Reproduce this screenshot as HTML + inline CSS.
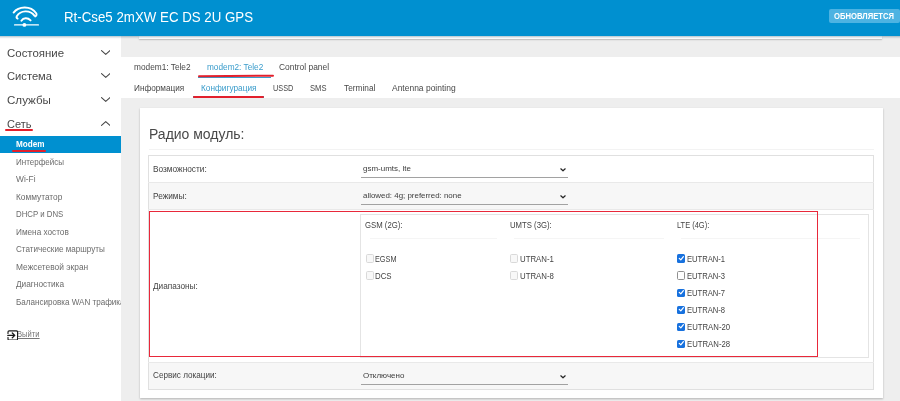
<!DOCTYPE html>
<html lang="ru"><head>
<meta charset="utf-8">
<title>Rt-Cse5 2mXW EC DS 2U GPS</title>
<style>
*{box-sizing:border-box;margin:0;padding:0}
html,body{width:900px;height:401px;overflow:hidden}
body{background:#eeeeee;font-family:"Liberation Sans",sans-serif;color:#444;position:relative}
a{color:inherit;text-decoration:none}
ul{list-style:none}
.page{position:absolute;left:-10px;top:-10px;width:920px;height:421px;background:#eeeeee;filter:blur(.4px)}
.page > .o{position:absolute;left:10px;top:10px;width:900px;height:401px}
.t{display:inline-block;position:relative;white-space:nowrap;transform-origin:0 50%}

/* header */
header{position:absolute;left:0;top:0;width:900px;height:35.7px;z-index:5}
header::before{content:"";position:absolute;left:-10px;top:-10px;right:-10px;bottom:0;background:#0090d0;box-shadow:0 1px 2px rgba(0,60,90,.35)}
header .logo{position:absolute;left:11px;top:4px;width:30px;height:24px}
header h1{position:absolute;left:63px;top:7px;font-size:14.7px;line-height:20px;font-weight:400;color:#fff;white-space:nowrap}
header .badge{position:absolute;left:828.5px;top:9.3px;width:71px;height:13.6px;border-radius:2px;background:#4db3e2;color:#fff;font-weight:700;font-size:8.3px;line-height:13.6px;white-space:nowrap}
header .badge .t{position:absolute;left:5px;top:0}

/* sidebar */
aside{position:absolute;left:-10px;top:36px;width:130.5px;height:375px;background:#fff;overflow:hidden;z-index:2}
aside .in{position:absolute;left:10px;top:0;width:120.5px;height:365px}
aside .top{position:absolute;left:7px;font-size:11.4px;line-height:16px;color:#484848}
aside .chev{position:absolute;left:100.8px;width:9.5px;height:5px}
aside .sub{position:absolute;left:16px;font-size:8.6px;line-height:12px;color:#6c6c6c}
aside .active{position:absolute;left:0;top:99.5px;width:120.5px;height:17.6px;background:#0090d0;box-shadow:-10px 0 0 #0090d0}
aside .active a{position:absolute;left:16px;top:3px;font-size:8.5px;line-height:12px;color:#fff;font-weight:700}
.red{position:absolute;background:#e2202c;height:1.7px;border-radius:1px}
aside .logout{position:absolute;left:6.9px;top:293.3px;width:60px;height:12px;font-size:8.6px;line-height:12px;color:#777}
aside .logout a{text-decoration:underline;position:absolute;left:10px;top:0}
aside .logout svg{position:absolute;left:0;top:0.3px;width:11.4px;height:10.8px}

/* main */
.stub{position:absolute;left:139.3px;top:36px;width:743.2px;height:3px;background:#fff;box-shadow:0 1px 1.5px rgba(0,0,0,.22)}
nav.tabs{position:absolute;left:120.8px;top:56.9px;width:790px;height:41.1px;background:#fff}
nav.tabs ul{position:absolute;left:-0.5px;margin-top:-0.5px;width:780px;height:20px}
nav.tabs li{position:absolute;top:0;font-size:8.2px;line-height:12px;color:#484848}
nav.tabs li.on{color:#3a9ccb}
nav.tabs .bl{position:absolute;height:1.6px;background:#3a9ccb}

section.card{position:absolute;left:139.6px;top:107.8px;width:743px;height:290.4px;background:#fff;box-shadow:0 1px 2px rgba(0,0,0,.25)}
section.card h2{position:absolute;left:10px;top:16px;font-size:14px;line-height:20px;font-weight:400;color:#484848}
section.card hr{position:absolute;left:9px;top:41.4px;width:725px;border:0;border-top:1px solid #f3f3f3}
table.cfg{position:absolute;left:8.6px;top:46.9px;width:725.6px;border-collapse:collapse;border:1px solid #e0e0e0}
table.cfg td{vertical-align:top;font-size:8.7px;line-height:12px;color:#444;padding:0;position:relative}
table.cfg tr{height:27px}
table.cfg tr.g{background:#f7f7f7}
table.cfg tr + tr > td{border-top:1px solid #e9e9e9}
table.cfg td.l{width:212px}
table.cfg td.l .t{position:absolute;left:5px;top:7px}
.sel{position:absolute;left:0;top:0;width:207.8px;height:22px;border-bottom:1px solid #a2a2a2;font-size:7.9px;line-height:12px;color:#3c3c3c}
.sel .t{position:absolute;left:2px;top:6px}
.sel svg{position:absolute;left:199.5px;top:12.6px;width:6px;height:3.6px}
table.bands{position:absolute;left:-0.8px;top:3.9px;width:509.2px;height:144.6px;border-collapse:collapse;border:1px solid #e4e4e4;background:#fff}
table.bands td{border:0 !important}
table.bands .h{position:absolute;left:5px;top:5px}
table.bands .ln{position:absolute;left:9px;right:8px;top:23.8px;height:1px;background:#f5f5f5}
table.bands li{position:absolute;left:5px;height:12px;white-space:nowrap}
table.bands li .t{position:absolute;left:10px;top:0;font-size:8.7px;line-height:12px}
.cb{position:absolute;left:-0.4px;top:-0.8px;width:8.2px;height:8.2px;border:1px solid #909090;border-radius:1.6px;background:#fff}
.cb.dis{border-color:#d9d9d9;background:#f8f8f8}
.cb.chk{border:0;background:#1771de}
.cb.chk svg{position:absolute;left:0.8px;top:0.8px;width:6.6px;height:6.6px}
.redbox{position:absolute;left:148.8px;top:210.8px;width:668.8px;height:146px;border:1.5px solid #e8283a;z-index:4}
</style>
</head>
<body>
<div class="page"><div class="o">

<header>
  <svg class="logo" viewBox="0 0 30 24" fill="none" stroke="#fff" stroke-linecap="round" stroke-linejoin="round">
    <path d="M2.6 8.6 C7.5 2.2 19.5 1.2 25.2 9.2 C26 10.6 25.4 11.8 24.2 12.4" stroke-width="1.9"></path>
    <path d="M23.4 11.6 C19 5.6 9.5 6.2 5.8 12.2 C5.2 13.4 5.8 14.2 6.6 14.6" stroke-width="1.9"></path>
    <path d="M10.4 16.8 C12.4 13.6 16.6 13.4 19.6 16.4" stroke-width="1.9"></path>
    <path d="M3.6 20.9 H27.4" stroke-width="1.35"></path>
    <circle cx="13.4" cy="20.9" r="1.9" fill="#fff" stroke="none"></circle>
  </svg>
  <h1><span class="t" style="left:0.6px;top:0.0px;transform:scaleX(0.905)">Rt-Cse5 2mXW EC DS 2U GPS</span></h1>
  <div class="badge"><span class="t" style="left:5.3px;top:1.0px;transform:scaleX(0.923)">ОБНОВЛЯЕТСЯ</span></div>
</header>

<aside><div class="in">
  <a class="top t" style="left:6.9px;top:8.8px;transform:scaleX(1.005)" href="#">Состояние</a>
  <svg class="chev" style="top:13.7px" viewBox="0 0 9.5 5" fill="none" stroke="#444" stroke-width="1.05" stroke-linecap="round" stroke-linejoin="round"><path d="M0.55 0.55 L4.75 4.45 L8.95 0.55"></path></svg>
  <a class="top t" style="left:6.9px;top:32.4px;transform:scaleX(0.981)" href="#">Система</a>
  <svg class="chev" style="top:37.4px" viewBox="0 0 9.5 5" fill="none" stroke="#444" stroke-width="1.05" stroke-linecap="round" stroke-linejoin="round"><path d="M0.55 0.55 L4.75 4.45 L8.95 0.55"></path></svg>
  <a class="top t" style="left:6.9px;top:56.1px;transform:scaleX(1.017)" href="#">Службы</a>
  <svg class="chev" style="top:61.2px" viewBox="0 0 9.5 5" fill="none" stroke="#444" stroke-width="1.05" stroke-linecap="round" stroke-linejoin="round"><path d="M0.55 0.55 L4.75 4.45 L8.95 0.55"></path></svg>
  <a class="top t" style="left:6.9px;top:79.6px;transform:scaleX(0.963)" href="#">Сеть</a>
  <svg class="chev" style="top:84.7px" viewBox="0 0 9.5 5" fill="none" stroke="#444" stroke-width="1.05" stroke-linecap="round" stroke-linejoin="round"><path d="M0.55 4.45 L4.75 0.55 L8.95 4.45"></path></svg>
  <span class="red" style="left:5.3px;top:93px;width:27.8px"></span>

  <div class="active"><a class="t" href="#" style="left:15.9px;top:2.5px;transform:scaleX(0.958)">Modem</a><span class="red" style="left:12.2px;top:14.9px;width:34.2px"></span></div>
  <a class="sub t" style="left:15.9px;top:119.7px;transform:scaleX(0.933)" href="#">Интерфейсы</a>
  <a class="sub t" style="left:15.9px;top:137.2px;transform:scaleX(0.973)" href="#">Wi-Fi</a>
  <a class="sub t" style="left:15.9px;top:154.9px;transform:scaleX(0.968)" href="#">Коммутатор</a>
  <a class="sub t" style="left:15.9px;top:172.3px;transform:scaleX(0.911)" href="#">DHCP и DNS</a>
  <a class="sub t" style="left:15.9px;top:189.9px;transform:scaleX(0.956)" href="#">Имена хостов</a>
  <a class="sub t" style="left:15.9px;top:207.3px;transform:scaleX(0.944)" href="#">Статические маршруты</a>
  <a class="sub t" style="left:15.9px;top:224.7px;transform:scaleX(0.976)" href="#">Межсетевой экран</a>
  <a class="sub t" style="left:15.9px;top:242.1px;transform:scaleX(0.963)" href="#">Диагностика</a>
  <a class="sub t" style="left:15.9px;top:259.7px;transform:scaleX(0.940)" href="#">Балансировка WAN трафика</a>

  <div class="logout">
    <a class="t" href="#" style="left:10.3px;top:-0.9px;transform:scaleX(0.888)">Выйти</a>
    <svg viewBox="0 0 11.4 10.8" fill="none" stroke="#1c1c1c" stroke-width="1.15" stroke-linecap="round" stroke-linejoin="round"><path d="M1 3.4 V1.9 Q1 0.8 2.1 0.8 H9.4 Q10.6 0.8 10.6 1.9 V8.9 Q10.6 10 9.4 10 H2.1 Q1 10 1 8.9 V7.4"></path><path d="M0.8 5.4 H7.6 M5.3 3 L7.8 5.4 L5.3 7.8" stroke-width="1.3"></path></svg>
  </div>
</div></aside>

<div class="stub"></div>

<nav class="tabs">
  <ul style="top:4px">
    <li style="left:14px"><a class="t" href="#" style="left:-0.7px;top:1.2px;transform:scaleX(1.014)">modem1: Tele2</a></li>
    <li class="on" style="left:87px"><a class="t" href="#" style="left:-0.4px;top:1.2px;transform:scaleX(1.008)">modem2: Tele2</a></li>
    <li style="left:160px"><a class="t" href="#" style="left:-0.9px;top:1.2px;transform:scaleX(1.029)">Control panel</a></li>
  </ul>
  <span class="bl" style="left:77.3px;top:19.8px;width:73px;height:1.3px"></span>
  <span class="red" style="left:77.3px;top:18.4px;width:76.4px;transform:rotate(-0.5deg)"></span>
  <ul style="top:25px">
    <li style="left:14px"><a class="t" href="#" style="left:-0.7px;top:1.2px;transform:scaleX(1.001)">Информация</a></li>
    <li class="on" style="left:81px"><a class="t" href="#" style="left:-0.4px;top:1.2px;transform:scaleX(1.010)">Конфигурация</a></li>
    <li style="left:153px"><a class="t" href="#" style="left:-0.1px;top:1.2px;transform:scaleX(0.892)">USSD</a></li>
    <li style="left:190px"><a class="t" href="#" style="left:-0.1px;top:1.2px;transform:scaleX(0.930)">SMS</a></li>
    <li style="left:224px"><a class="t" href="#" style="left:-0.5px;top:1.2px;transform:scaleX(1.014)">Terminal</a></li>
    <li style="left:272px"><a class="t" href="#" style="left:-0.2px;top:1.2px;transform:scaleX(1.035)">Antenna pointing</a></li>
  </ul>
  <span class="bl" style="left:71.9px;top:39.1px;width:71.6px;height:2.2px"></span>
  <span class="red" style="left:72.1px;top:39.3px;width:71.2px;height:1.6px"></span>
</nav>

<section class="card">
  <h2><span class="t" style="left:-0.2px;top:0.4px;transform:scaleX(0.998)">Радио модуль:</span></h2>
  <hr>
  <table class="cfg">
    <tbody><tr>
      <td class="l"><span class="t" style="left:4.3px;top:7.6px;transform:scaleX(0.955)">Возможности:</span></td>
      <td><div class="sel"><span class="t" style="left:2.0px;top:7.5px;transform:scaleX(1.011)">gsm-umts, lte</span><svg viewBox="0 0 6 3.6" fill="none" stroke="#222" stroke-width="1.2" stroke-linecap="round" stroke-linejoin="round"><path d="M0.8 0.8 L3 2.8 L5.2 0.8"></path></svg></div></td>
    </tr>
    <tr class="g">
      <td class="l"><span class="t" style="left:4.3px;top:7.4px;transform:scaleX(0.953)">Режимы:</span></td>
      <td><div class="sel"><span class="t" style="left:2.0px;top:7.5px;transform:scaleX(1.003)">allowed: 4g; preferred: none</span><svg viewBox="0 0 6 3.6" fill="none" stroke="#222" stroke-width="1.2" stroke-linecap="round" stroke-linejoin="round"><path d="M0.8 0.8 L3 2.8 L5.2 0.8"></path></svg></div></td>
    </tr>
    <tr style="height:152.9px">
      <td class="l"><span class="t" style="left:4.3px;top:69.9px;transform:scaleX(0.949)">Диапазоны:</span></td>
      <td>
        <table class="bands">
          <tbody><tr>
            <td style="width:145px">
              <div class="h t" style="left:4.3px;top:4.4px;transform:scaleX(0.893)">GSM (2G):</div><div class="ln"></div>
              <ul>
                <li style="top:40.6px"><span class="cb dis"></span><span class="t" style="left:9.5px;top:-2.4px;transform:scaleX(0.840)">EGSM</span></li>
                <li style="top:57.6px"><span class="cb dis"></span><span class="t" style="left:9.5px;top:-2.4px;transform:scaleX(0.905)">DCS</span></li>
              </ul>
            </td>
            <td style="width:167px">
              <div class="h t" style="left:4.8px;top:4.4px;transform:scaleX(0.890)">UMTS (3G):</div><div class="ln"></div>
              <ul>
                <li style="top:40.6px"><span class="cb dis"></span><span class="t" style="left:10.0px;top:-2.4px;transform:scaleX(0.900)">UTRAN-1</span></li>
                <li style="top:57.6px"><span class="cb dis"></span><span class="t" style="left:10.0px;top:-2.4px;transform:scaleX(0.900)">UTRAN-8</span></li>
              </ul>
            </td>
            <td>
              <div class="h t" style="left:4.9px;top:4.4px;transform:scaleX(0.859)">LTE (4G):</div><div class="ln"></div>
              <ul>
                <li style="top:40.6px"><span class="cb chk"><svg viewBox="0 0 6.6 6.6" fill="none" stroke="#fff" stroke-width="1.25" stroke-linecap="round" stroke-linejoin="round"><path d="M1.3 3.4 L2.8 4.9 L5.4 1.7"></path></svg></span><span class="t" style="left:9.6px;top:-2.4px;transform:scaleX(0.877)">EUTRAN-1</span></li>
                <li style="top:57.6px"><span class="cb"></span><span class="t" style="left:9.6px;top:-2.4px;transform:scaleX(0.877)">EUTRAN-3</span></li>
                <li style="top:74.8px"><span class="cb chk"><svg viewBox="0 0 6.6 6.6" fill="none" stroke="#fff" stroke-width="1.25" stroke-linecap="round" stroke-linejoin="round"><path d="M1.3 3.4 L2.8 4.9 L5.4 1.7"></path></svg></span><span class="t" style="left:9.6px;top:-2.4px;transform:scaleX(0.877)">EUTRAN-7</span></li>
                <li style="top:91.8px"><span class="cb chk"><svg viewBox="0 0 6.6 6.6" fill="none" stroke="#fff" stroke-width="1.25" stroke-linecap="round" stroke-linejoin="round"><path d="M1.3 3.4 L2.8 4.9 L5.4 1.7"></path></svg></span><span class="t" style="left:9.6px;top:-2.5px;transform:scaleX(0.877)">EUTRAN-8</span></li>
                <li style="top:108.8px"><span class="cb chk"><svg viewBox="0 0 6.6 6.6" fill="none" stroke="#fff" stroke-width="1.25" stroke-linecap="round" stroke-linejoin="round"><path d="M1.3 3.4 L2.8 4.9 L5.4 1.7"></path></svg></span><span class="t" style="left:9.6px;top:-2.6px;transform:scaleX(0.893)">EUTRAN-20</span></li>
                <li style="top:125.8px"><span class="cb chk"><svg viewBox="0 0 6.6 6.6" fill="none" stroke="#fff" stroke-width="1.25" stroke-linecap="round" stroke-linejoin="round"><path d="M1.3 3.4 L2.8 4.9 L5.4 1.7"></path></svg></span><span class="t" style="left:9.6px;top:-2.6px;transform:scaleX(0.893)">EUTRAN-28</span></li>
              </ul>
            </td>
          </tr>
        </tbody></table>
      </td>
    </tr>
    <tr class="g">
      <td class="l"><span class="t" style="left:4.3px;top:6.8px;transform:scaleX(0.937)">Сервис локации:</span></td>
      <td><div class="sel"><span class="t" style="left:2.0px;top:7.0px;transform:scaleX(1.012)">Отключено</span><svg viewBox="0 0 6 3.6" fill="none" stroke="#222" stroke-width="1.2" stroke-linecap="round" stroke-linejoin="round"><path d="M0.8 0.8 L3 2.8 L5.2 0.8"></path></svg></div></td>
    </tr>
  </tbody></table>
</section>

<div class="redbox"></div>

</div></div>


</body></html>
